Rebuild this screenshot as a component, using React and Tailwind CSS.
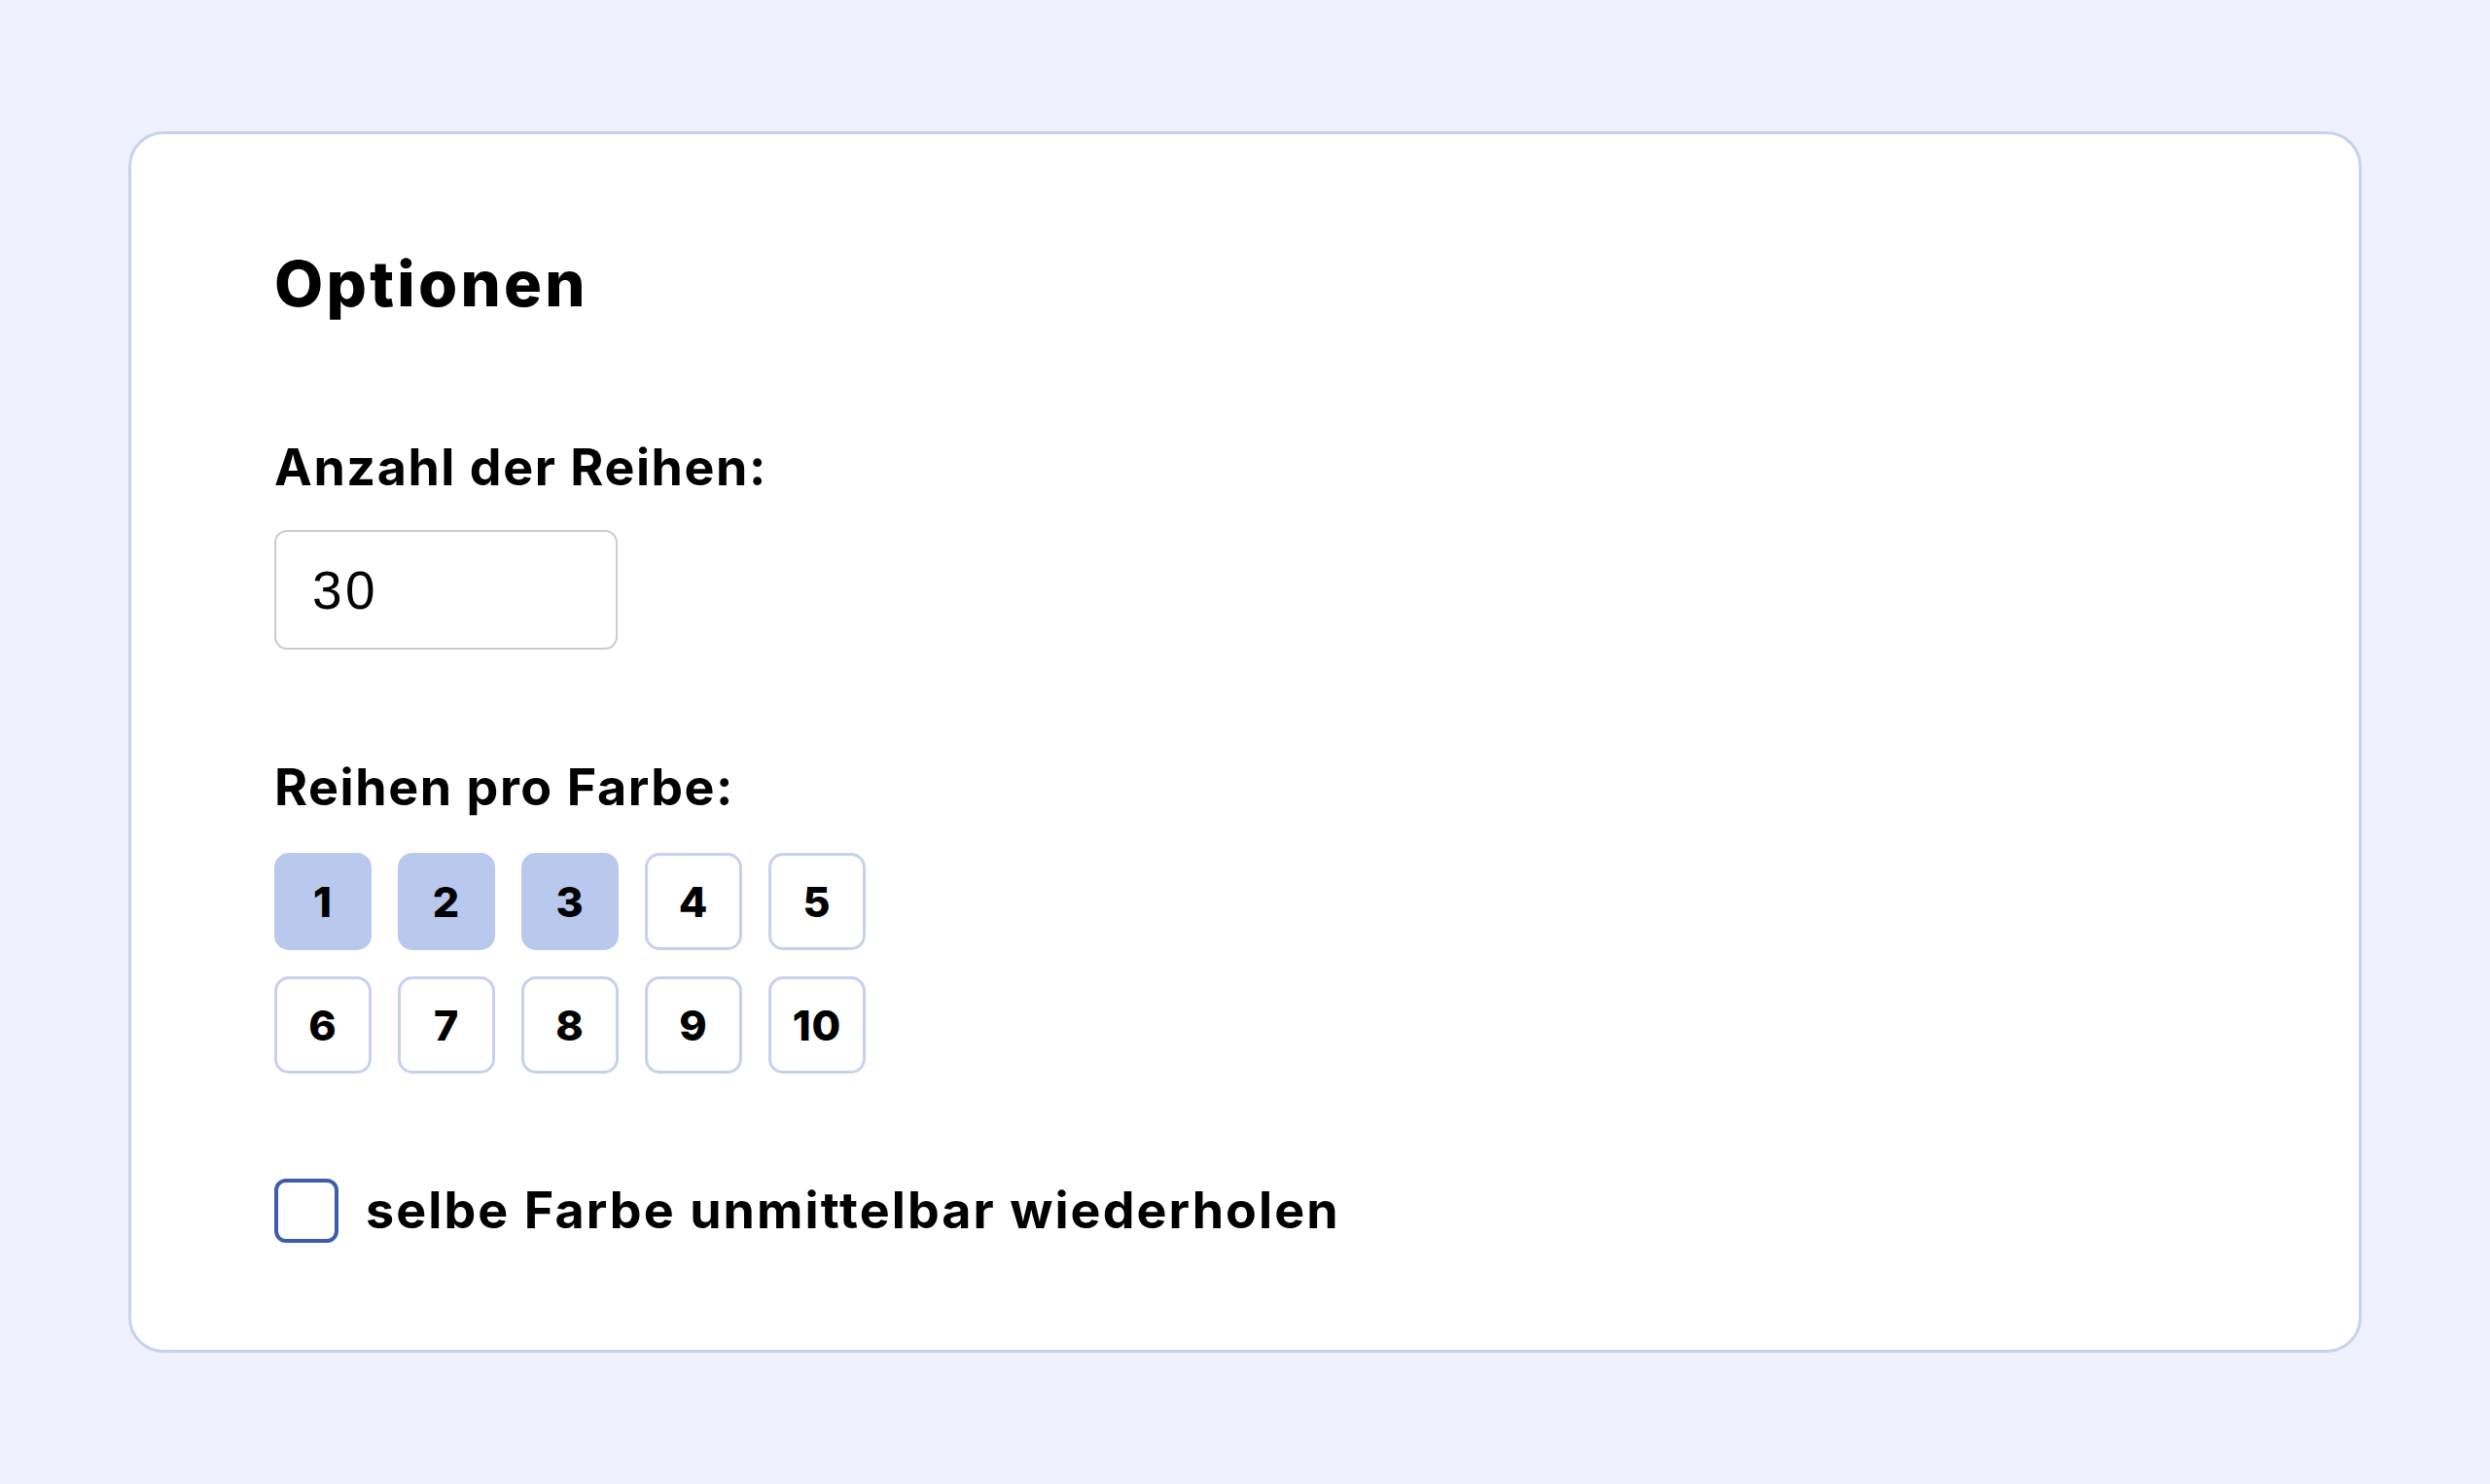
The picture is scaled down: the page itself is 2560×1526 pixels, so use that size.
import React, { useState } from "react";

const NUMBERS = [1, 2, 3, 4, 5, 6, 7, 8, 9, 10];

function RowButton({ n, active, onClick }) {
  return (
    <button
      type="button"
      onClick={onClick}
      className={
        active
          ? "flex h-[100px] w-[100px] items-center justify-center rounded-[15px] border-[3px] border-[#b9c8ed] bg-[#b9c8ed] font-['Inter',sans-serif] text-[43px] font-extrabold leading-none tracking-[0.02em] text-black"
          : "flex h-[100px] w-[100px] items-center justify-center rounded-[15px] border-[3px] border-[#c6d1ee] bg-white font-['Inter',sans-serif] text-[43px] font-extrabold leading-none tracking-[0.02em] text-black"
      }
    >
      {n}
    </button>
  );
}

export default function App() {
  const [rows, setRows] = useState("30");
  const [selected, setSelected] = useState([1, 2, 3]);
  const [repeat, setRepeat] = useState(false);

  const toggle = (n) =>
    setSelected((s) => (s.includes(n) ? s.filter((x) => x !== n) : [...s, n]));

  return (
    <div className="min-h-screen bg-[#eff2fd] px-[132px] py-[135px]">
      <div className="rounded-[36px] border-[3px] border-[#c8d2ee] bg-white pb-[110px] pl-[147px] pt-[121px]">
        <h1 className="font-['Inter',sans-serif] text-[65px] font-extrabold leading-none tracking-[0.05em] text-black">
          Optionen
        </h1>

        <div className="mt-[131px] font-['Inter',sans-serif] text-[52px] font-bold leading-none tracking-[0.03em] text-black">
          Anzahl der Reihen:
        </div>
        <input
          type="text"
          value={rows}
          onChange={(e) => setRows(e.target.value)}
          className="mt-[38px] block h-[123px] w-[353px] rounded-[13px] border-2 border-[#cbcbcb] bg-white pl-[37px] font-['Liberation_Sans',Arial,sans-serif] text-[55px] tracking-[0.06em] text-black outline-none"
        />

        <div className="mt-[116px] font-['Inter',sans-serif] text-[52px] font-bold leading-none tracking-[0.03em] text-black">
          Reihen pro Farbe:
        </div>
        <div className="mt-[41px] grid w-max grid-cols-5 gap-[27px]">
          {NUMBERS.map((n) => (
            <RowButton key={n} n={n} active={selected.includes(n)} onClick={() => toggle(n)} />
          ))}
        </div>

        <label className="mt-[108px] flex w-max cursor-pointer items-center gap-[28px]">
          <input
            type="checkbox"
            checked={repeat}
            onChange={(e) => setRepeat(e.target.checked)}
            className="peer sr-only"
          />
          <span className="block h-[66px] w-[66px] rounded-[12px] border-[4px] border-[#3d5cb0] bg-white peer-checked:bg-[#3d5cb0]" />
          <span className="font-['Inter',sans-serif] text-[52px] font-bold leading-none tracking-[0.04em] text-black">
            selbe Farbe unmittelbar wiederholen
          </span>
        </label>
      </div>
    </div>
  );
}
